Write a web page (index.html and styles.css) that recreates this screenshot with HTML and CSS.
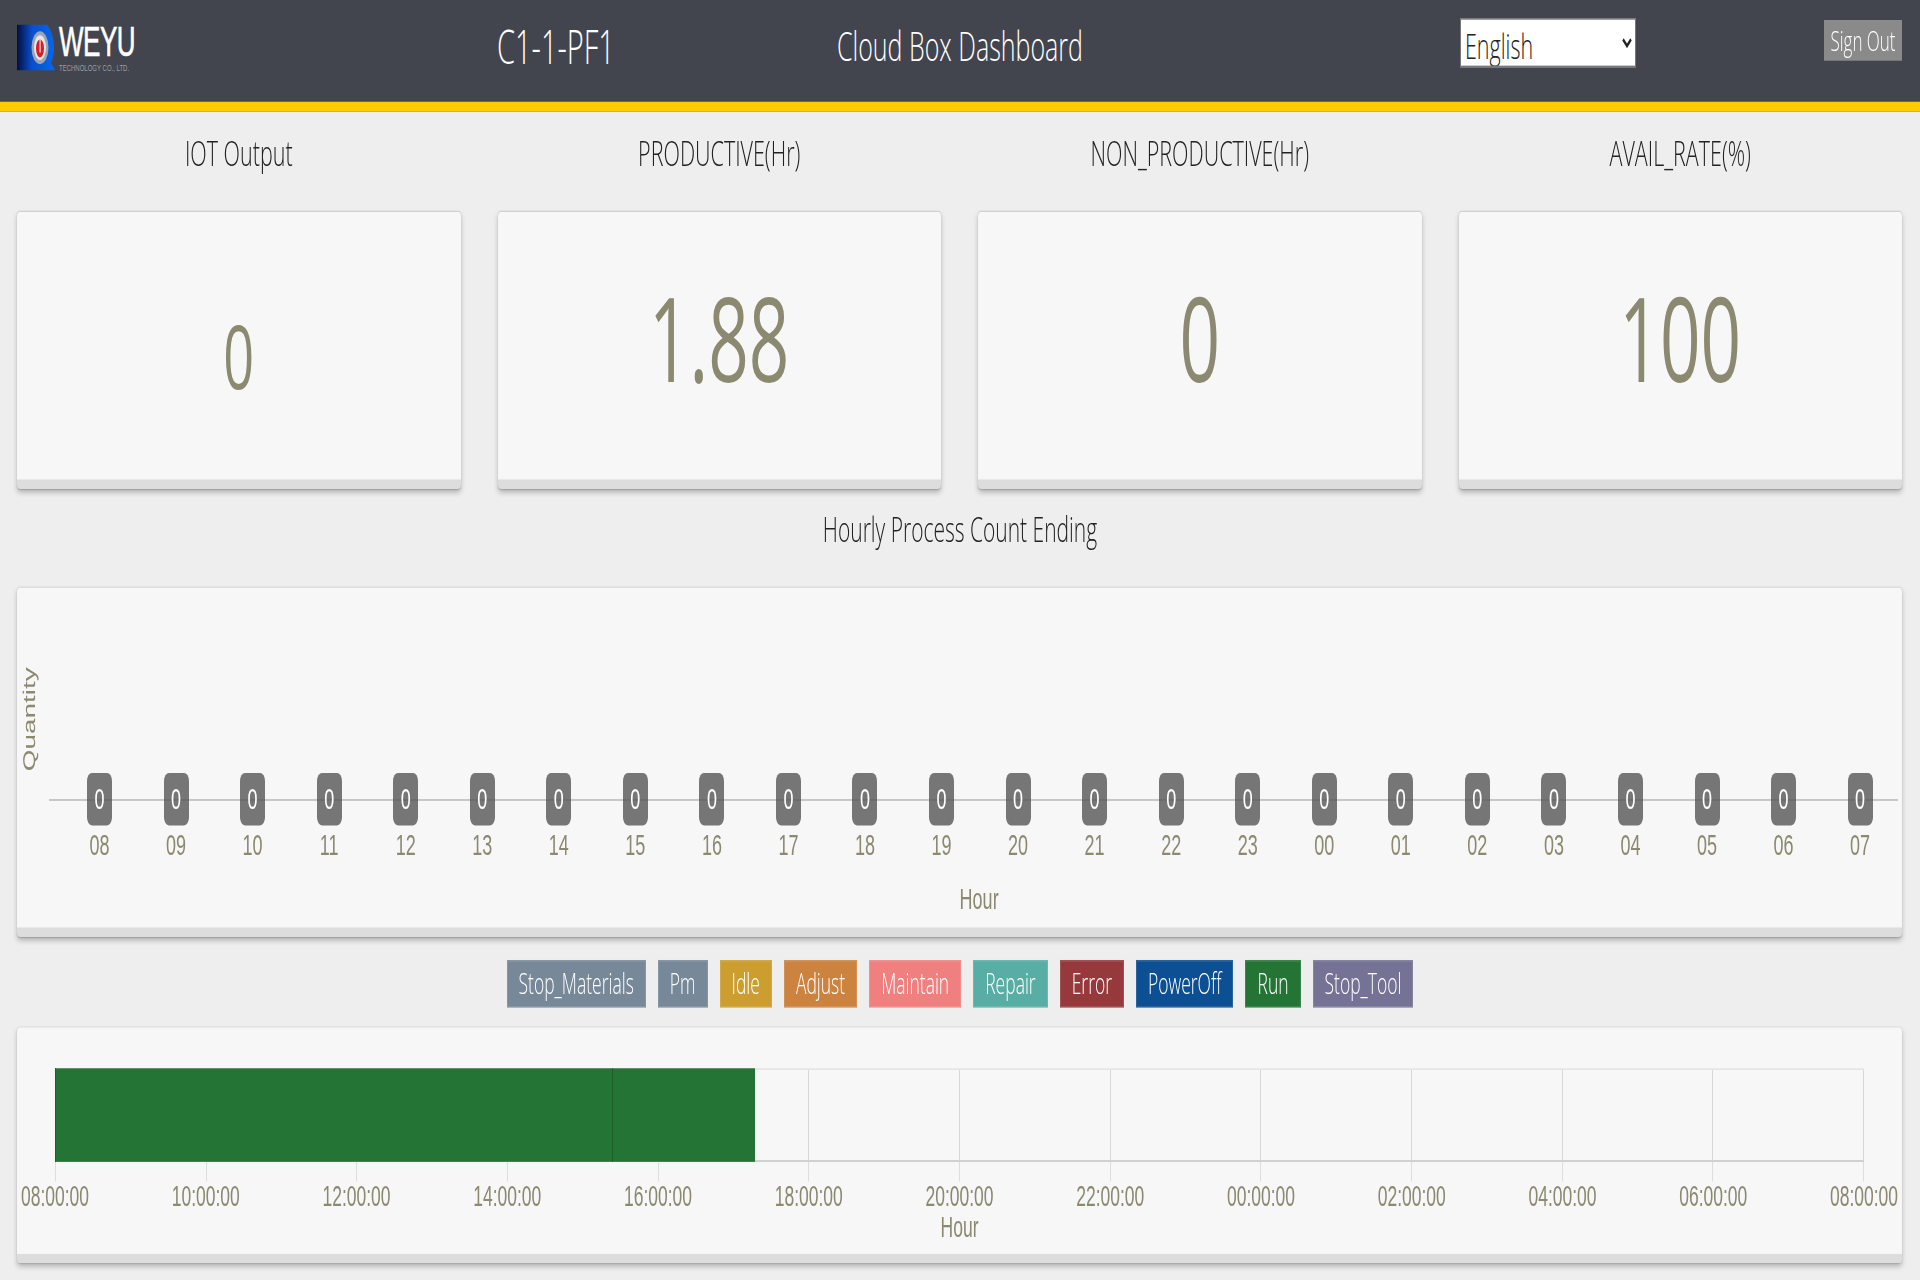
FILE: index.html
```html
<!DOCTYPE html>
<html lang="en">
<head>
  <meta charset="UTF-8" />
  <meta name="viewport" content="width=device-width, initial-scale=1" />
  <title>Cloud Box Dashboard</title>
  <link rel="stylesheet" href="styles.css">
</head>
<body>
<div class="page">

  <header class="topbar">
    <div class="logo">
      <svg class="logo-mark" viewBox="0 0 38 28" width="38" height="28">
        <defs>
          <linearGradient id="logoBlue" x1="0" x2="1" y1="0" y2="0">
            <stop offset="0" stop-color="#04103c" />
            <stop offset="0.4" stop-color="#0a4fd0" />
            <stop offset="1" stop-color="#0a66ea" />
          </linearGradient>
        </defs>
        <path d="M0 0H30Q37 6 37 14Q37 20 34 23L38 28H0Z" fill="url(#logoBlue)" />
        <ellipse cx="23" cy="14" rx="8.5" ry="10" fill="#9aa6b4" />
        <ellipse cx="23" cy="14" rx="6" ry="7.5" fill="#e6e6e6" />
        <ellipse cx="23" cy="14.5" rx="4" ry="5.5" fill="#d0202c" />
        <rect x="22.5" y="9" width="1.2" height="8" fill="#f6d8d8" />
      </svg>
      <div class="logo-text">
        <div class="logo-name">WEYU</div>
        <div class="logo-sub">TECHNOLOGY CO., LTD.</div>
      </div>
    </div>
    <div class="machine">C1-1-PF1</div>
    <div class="apptitle">Cloud Box Dashboard</div>
    <div></div>
    <select class="lang">
      <option>English</option>
    </select>
    <div class="signout-wrap"><button class="signout" type="button">Sign Out</button></div>
  </header>

  <section class="kpi-row">
    <div class="kpi">
      <h2 class="heading">IOT Output</h2>
      <div class="card kpi-card"><span class="value value-small">0</span></div>
    </div>
    <div class="kpi">
      <h2 class="heading">PRODUCTIVE(Hr)</h2>
      <div class="card kpi-card"><span class="value">1.88</span></div>
    </div>
    <div class="kpi">
      <h2 class="heading">NON_PRODUCTIVE(Hr)</h2>
      <div class="card kpi-card"><span class="value">0</span></div>
    </div>
    <div class="kpi">
      <h2 class="heading">AVAIL_RATE(%)</h2>
      <div class="card kpi-card"><span class="value">100</span></div>
    </div>
  </section>

  <h2 class="heading chart-heading">Hourly Process Count Ending</h2>

  <section class="card hourly">
    <div class="y-title">Quantity</div>
    <div class="zero-line"></div>
    <div class="hours">
      <div class="hour"><span class="pill">0</span><span class="tick-label">08</span></div>
      <div class="hour"><span class="pill">0</span><span class="tick-label">09</span></div>
      <div class="hour"><span class="pill">0</span><span class="tick-label">10</span></div>
      <div class="hour"><span class="pill">0</span><span class="tick-label">11</span></div>
      <div class="hour"><span class="pill">0</span><span class="tick-label">12</span></div>
      <div class="hour"><span class="pill">0</span><span class="tick-label">13</span></div>
      <div class="hour"><span class="pill">0</span><span class="tick-label">14</span></div>
      <div class="hour"><span class="pill">0</span><span class="tick-label">15</span></div>
      <div class="hour"><span class="pill">0</span><span class="tick-label">16</span></div>
      <div class="hour"><span class="pill">0</span><span class="tick-label">17</span></div>
      <div class="hour"><span class="pill">0</span><span class="tick-label">18</span></div>
      <div class="hour"><span class="pill">0</span><span class="tick-label">19</span></div>
      <div class="hour"><span class="pill">0</span><span class="tick-label">20</span></div>
      <div class="hour"><span class="pill">0</span><span class="tick-label">21</span></div>
      <div class="hour"><span class="pill">0</span><span class="tick-label">22</span></div>
      <div class="hour"><span class="pill">0</span><span class="tick-label">23</span></div>
      <div class="hour"><span class="pill">0</span><span class="tick-label">00</span></div>
      <div class="hour"><span class="pill">0</span><span class="tick-label">01</span></div>
      <div class="hour"><span class="pill">0</span><span class="tick-label">02</span></div>
      <div class="hour"><span class="pill">0</span><span class="tick-label">03</span></div>
      <div class="hour"><span class="pill">0</span><span class="tick-label">04</span></div>
      <div class="hour"><span class="pill">0</span><span class="tick-label">05</span></div>
      <div class="hour"><span class="pill">0</span><span class="tick-label">06</span></div>
      <div class="hour"><span class="pill">0</span><span class="tick-label">07</span></div>
    </div>
    <div class="x-title">Hour</div>
  </section>

  <div class="legend">
    <span class="tag tag-materials">Stop_Materials</span>
    <span class="tag tag-pm">Pm</span>
    <span class="tag tag-idle">Idle</span>
    <span class="tag tag-adjust">Adjust</span>
    <span class="tag tag-maintain">Maintain</span>
    <span class="tag tag-repair">Repair</span>
    <span class="tag tag-error">Error</span>
    <span class="tag tag-poweroff">PowerOff</span>
    <span class="tag tag-run">Run</span>
    <span class="tag tag-tool">Stop_Tool</span>
  </div>

  <section class="card timeline">
    <div class="plot">
      <div class="grid">
        <i></i><i></i><i></i><i></i><i></i><i></i><i></i><i></i><i></i><i></i><i></i><i></i>
      </div>
      <div class="bars">
        <div class="bar" style="width: 30.8%"></div>
        <div class="bar" style="width: 7.9%"></div>
      </div>
    </div>
    <div class="ticks">
      <i></i><i></i><i></i><i></i><i></i><i></i><i></i><i></i><i></i><i></i><i></i><i></i>
    </div>
    <div class="time-labels">
      <span class="time">08:00:00</span>
      <span class="time">10:00:00</span>
      <span class="time">12:00:00</span>
      <span class="time">14:00:00</span>
      <span class="time">16:00:00</span>
      <span class="time">18:00:00</span>
      <span class="time">20:00:00</span>
      <span class="time">22:00:00</span>
      <span class="time">00:00:00</span>
      <span class="time">02:00:00</span>
      <span class="time">04:00:00</span>
      <span class="time">06:00:00</span>
      <span class="time">08:00:00</span>
    </div>
    <div class="x-title timeline-title">Hour</div>
  </section>

</div>
</body>
</html>
```

FILE: styles.css
```css
/* the reference is a 1920x780 page stretched to 1280 tall */
* {
  box-sizing: border-box;
}

html, body {
  margin: 0;
  padding: 0;
  background: #eee;
}

body {
  height: 1280px;
  overflow: hidden;
}

.page {
  width: 1920px;
  height: 780px;
  transform: scaleY(1.641);
  transform-origin: 0 0;
  font-family: "Open Sans", "Liberation Sans", sans-serif;
  font-weight: 300;
  color: #222;
}

/* top bar */
.topbar {
  display: grid;
  grid-template-columns: 296px 486px 322px 339px 176px 1fr;
  align-items: center;
  height: 68px;
  padding: 0 18px 6px 17px;
  background: #43454e;
  border-bottom: 6px solid #ffcc00;
  color: #fff;
}

.logo {
  display: flex;
  gap: 4px;
  margin-top: 2px;
}

.logo-mark {
  margin-top: 1.5px;
}

.logo-text {
  font-family: "Liberation Sans", sans-serif;
  font-weight: 400;
}

.logo-name {
  margin-top: 2px;
  font-size: 26px;
  line-height: 20px;
  letter-spacing: -0.5px;
  -webkit-text-stroke: 0.4px #fff;
}

.logo-sub {
  margin-top: 3px;
  font-size: 6px;
  line-height: 7px;
  color: #9a9ca2;
  white-space: nowrap;
}

.machine, .apptitle {
  text-align: center;
  font-size: 25px;
  font-weight: 300;
  margin-bottom: 2px;
}

.machine {
  font-size: 29px;
}

.lang {
  width: 176px;
  height: 30px;
  margin-bottom: 4px;
  padding: 0;
  border: 1px solid #777;
  background: #fff;
  color: #222;
  font-family: inherit;
  font-weight: 300;
  font-size: 21.5px;
}

.signout-wrap {
  display: flex;
  justify-content: flex-end;
  padding-bottom: 8px;
}

.signout {
  width: 78px;
  height: 25px;
  padding: 0;
  border: none;
  background: #8a8a8a;
  color: #fff;
  font-family: inherit;
  font-weight: 300;
  font-size: 17px;
}

/* cards */
.card {
  background: #f7f7f7;
  border-bottom: 6px solid #ddd;
  border-radius: 3px;
  box-shadow: 0 2px 4px rgba(0,0,0,0.22), 0 0 1px rgba(0,0,0,0.18);
}

.heading {
  margin: 0;
  font-size: 21.5px;
  font-weight: 300;
  line-height: 50px;
  text-align: center;
}

.kpi-row {
  display: grid;
  grid-template-columns: repeat(4, 1fr);
  gap: 37px;
  padding: 0 18px 0 17px;
}

.kpi .heading {
  height: 60.5px;
}

.kpi-card {
  display: flex;
  align-items: center;
  justify-content: center;
  height: 169.5px;
}

.value {
  margin-top: -10px;
  font-size: 71px;
  font-weight: 400;
  line-height: 1;
  color: #8b8970;
}

.value-small {
  margin-top: 11px;
  font-size: 54px;
}

.chart-heading {
  height: 60.2px;
  font-size: 21px;
  line-height: 48px;
}

/* hourly chart */
.hourly {
  position: relative;
  height: 212.7px;
  margin: 0 18px 0 17px;
  padding: 113px 5px 0 44.25px;
}

.y-title {
  position: absolute;
  left: 3px;
  top: 112px;
  transform: rotate(-90deg);
  transform-origin: 0 0;
  font-family: "Liberation Sans", sans-serif;
  font-weight: 400;
  font-size: 17px;
  line-height: 20px;
  color: #8b8970;
  text-rendering: geometricPrecision;
}

.zero-line {
  position: absolute;
  left: 32px;
  right: 4px;
  top: 129px;
  height: 1px;
  background: #bdbdbd;
}

.hours {
  position: relative;
  display: flex;
}

.hour {
  flex: 0 0 76.55px;
  display: flex;
  flex-direction: column;
  align-items: center;
}

.pill {
  width: 25px;
  height: 32px;
  border-radius: 5px;
  background: rgba(85,85,85,0.8);
  color: #fff;
  font-family: "Liberation Sans", sans-serif;
  font-weight: 400;
  font-size: 18px;
  line-height: 32px;
  text-align: center;
}

.tick-label {
  margin-top: 1.5px;
  font-family: "Liberation Sans", sans-serif;
  font-weight: 400;
  font-size: 18px;
  line-height: 20px;
  color: #8b8970;
}

.x-title {
  margin-top: 13px;
  text-align: center;
  font-family: "Liberation Sans", sans-serif;
  font-weight: 400;
  font-size: 18px;
  line-height: 20px;
  color: #8b8970;
}

/* legend */
.legend {
  display: flex;
  justify-content: center;
  gap: 12px;
  height: 29px;
  margin: 14px 0 12.5px;
}

.tag {
  padding: 0 12px;
  color: #fff;
  font-size: 17.5px;
  line-height: 29px;
  white-space: nowrap;
  box-shadow: inset 0 0 0 1px rgba(255,255,255,0.12);
}

.tag-materials, .tag-pm { background: #778899; }
.tag-idle { background: #cc9e2f; }
.tag-adjust { background: #cc833f; }
.tag-maintain { background: #f08080; }
.tag-repair { background: #58ada5; }
.tag-error { background: #96393c; }
.tag-poweroff { background: #0c4f92; }
.tag-run { background: #247535; }
.tag-tool { background: #757395; }

/* timeline */
.timeline {
  height: 143.5px;
  margin: 0 18px 0 17px;
  padding: 25px 38px 0 38px;
}

.plot {
  position: relative;
  height: 57px;
}

.grid {
  display: grid;
  grid-template-columns: repeat(12, 1fr);
  height: 100%;
  border-top: 1px solid #e4e4e4;
  border-bottom: 1px solid #c8c8c8;
  border-left: 1px solid #d8d8d8;
}

.grid i {
  border-right: 1px solid #d8d8d8;
}

.bars {
  position: absolute;
  inset: 0;
  display: flex;
}

.bar {
  background: #247535;
  border-left: 1px solid #1d5f2b;
}

.ticks {
  display: grid;
  grid-template-columns: repeat(12, 1fr);
  height: 12px;
  border-left: 1px solid #ddd;
}

.ticks i {
  border-right: 1px solid #ddd;
}

.time-labels {
  display: flex;
  justify-content: space-between;
  height: 18px;
}

.time {
  display: flex;
  justify-content: center;
  width: 0;
  font-family: "Liberation Sans", sans-serif;
  font-weight: 400;
  font-size: 17.5px;
  line-height: 18px;
  color: #8b8970;
  white-space: nowrap;
}

.timeline-title {
  margin-top: 0;
  font-size: 17.5px;
}
```
